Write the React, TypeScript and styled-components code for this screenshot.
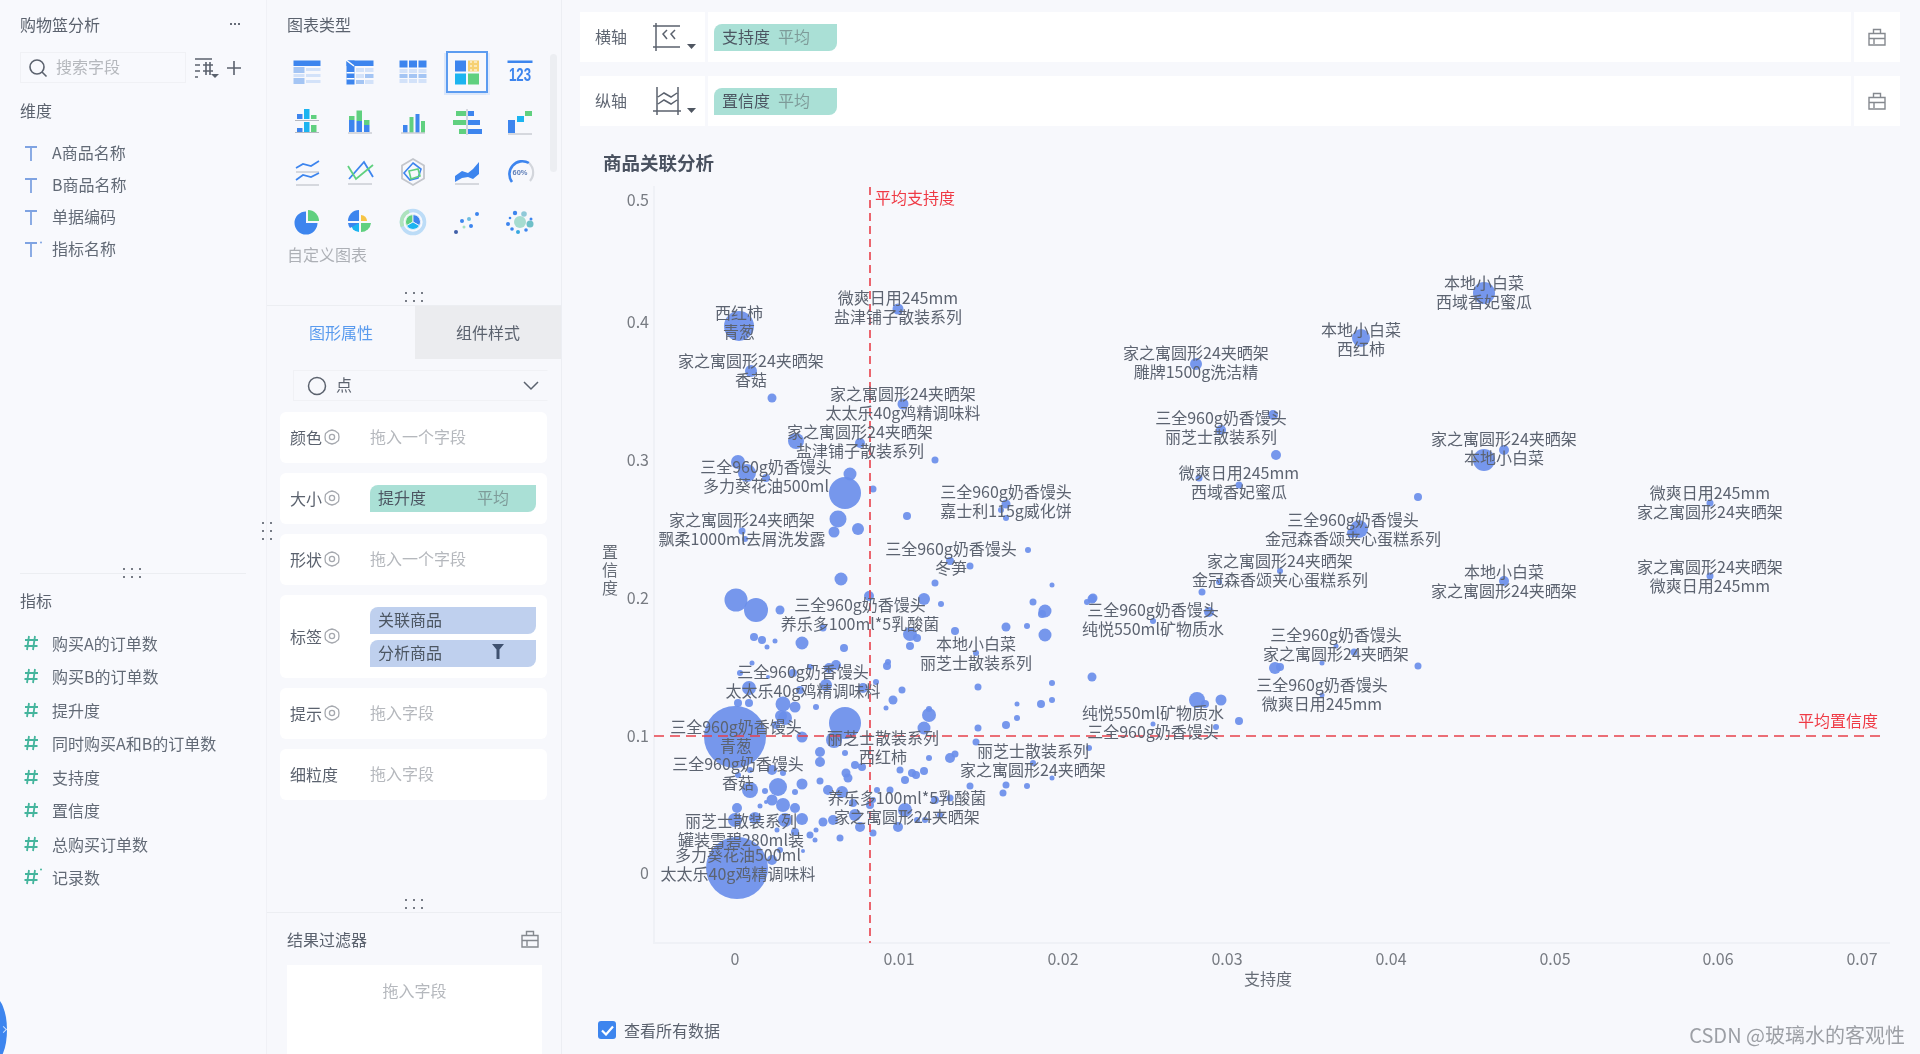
import React from 'react';
import styled, { createGlobalStyle } from 'styled-components';

const Global = createGlobalStyle`
  html, body { margin: 0; padding: 0; background: #f7f8fc; }
  * { box-sizing: border-box; }
  body { font-family: "Noto Sans CJK SC", "Noto Sans", sans-serif; font-size: 16px; color: #5b626e; }
`;

const Page = styled.div`
  position: relative;
  display: flex;
  width: 1920px;
  height: 1054px;
  overflow: hidden;
  background: #f7f8fc;
  filter: blur(0.45px);
`;

const LeftPanel = styled.aside`
  position: relative;
  flex: none;
  width: 266px;
  display: flex;
  flex-direction: column;
  background: #f8f9fd;
`;

const LeftTop = styled.div`
  position: relative;
  flex: none;
  height: 574px;
  margin: 0 20px;
  border-bottom: 1px solid #eceef2;
`;

const Header = styled.div`
  height: 50px;
  display: flex;
  align-items: center;
  justify-content: space-between;
  padding: 0 5px 2px 0;
  line-height: 20px;
`;

const More = styled.span`
  width: 12px;
  height: 2px;
  background: radial-gradient(circle, #666c78 1px, transparent 1.2px) 0 0 / 4px 2px;
`;

const SearchRow = styled.div`
  display: flex;
  align-items: center;
  margin-top: 2px;
`;

const SearchBox = styled.div`
  width: 166px;
  height: 31px;
  display: flex;
  align-items: center;
  gap: 8px;
  padding: 0 0 3px 7px;
  border: 1px solid #f0f1f5;
  color: #b5b8bd;
  & > svg { margin-top: 3px; }
`;

const ToolIcons = styled.div`
  display: flex;
  align-items: center;
  gap: 8px;
  margin-left: 8px;
`;

const SectionTitle = styled.div`
  height: 32px;
  line-height: 32px;
`;

const DimTitle = styled(SectionTitle)`
  margin-top: 11px;
  margin-bottom: 10px;
`;

const MeasureArea = styled.div`
  padding: 10px 20px 0;
`;

const MeasureTitle = styled(SectionTitle)`
  margin-bottom: 10px;
`;

const FieldRow = styled.div<{ $h: number }>`
  height: ${p => p.$h}px;
  display: flex;
  align-items: center;
  gap: 6px;
  padding-left: 4px;
  color: #626a76;
  white-space: nowrap;
`;

const DimIcon = styled.span`
  display: flex;
  margin-top: 4px;
`;

const Grip = styled.div<{ $vertical?: boolean }>`
  position: absolute;
  width: ${p => (p.$vertical ? 16 : 24)}px;
  height: ${p => (p.$vertical ? 24 : 16)}px;
  background: radial-gradient(circle, #777c86 1px, transparent 1.3px) 0 0 / 8px 8px;
`;

const GripLeft = styled(Grip)`
  left: 100px;
  bottom: -8px;
`;

const GripMid = styled(Grip)`
  left: 135px;
  bottom: 0;
`;

const GripSide = styled(Grip)`
  left: -8px;
  top: 519px;
`;

const Launcher = styled.div`
  position: absolute;
  left: -20px;
  top: 997px;
  width: 27px;
  height: 66px;
  border-radius: 50%;
  background: #3d85ee;
  &::after {
    content: '';
    position: absolute;
    left: 21px;
    top: 30px;
    width: 4px;
    height: 4px;
    border-top: 1px solid #cfe2ff;
    border-right: 1px solid #cfe2ff;
    transform: rotate(45deg);
  }
`;

const MidPanel = styled.section`
  position: relative;
  flex: none;
  width: 296px;
  display: flex;
  flex-direction: column;
  border-left: 1px solid #f0f1f6;
  border-right: 1px solid #eceef3;
`;

const ChartTypes = styled.div`
  position: relative;
  flex: none;
  height: 306px;
  border-bottom: 1px solid #eceef2;
`;

const PanelHeading = styled.div`
  height: 50px;
  line-height: 48px;
  padding-left: 20px;
`;

const IconGrid = styled.div`
  display: grid;
  grid-template-columns: repeat(5, 53.4px);
  grid-auto-rows: 50px;
  margin-top: -3px;
  padding-left: 13px;
`;

const IconCell = styled.div<{ $active?: boolean }>`
  display: flex;
  align-items: center;
  justify-content: center;
  & > span {
    width: 42px;
    height: 42px;
    display: flex;
    align-items: center;
    justify-content: center;
    border: 2px solid ${p => (p.$active ? '#5c9cf0' : 'transparent')};
    box-shadow: ${p => (p.$active ? '-2px 2px 0 #dbe7fa, 2px 2px 0 #e4ecfb' : 'none')};
  }
`;

const CustomLabel = styled.div`
  margin: -3px 0 0 20px;
  line-height: 20px;
  color: #adb0b6;
`;

const ScrollThumb = styled.div`
  position: absolute;
  left: 283px;
  top: 54px;
  width: 7px;
  height: 118px;
  border-radius: 4px;
  background: #eceef2;
`;

const AttrBlock = styled.div`
  position: relative;
  flex: none;
  height: 607px;
  border-bottom: 1px solid #eceef2;
`;

const Tabs = styled.div`
  display: flex;
  height: 53px;
`;

const Tab = styled.div<{ $active?: boolean }>`
  width: ${p => (p.$active ? 148 : 146)}px;
  display: flex;
  align-items: center;
  justify-content: center;
  padding-bottom: 2px;
  color: ${p => (p.$active ? '#5a9bee' : '#5b626e')};
  background: ${p => (p.$active ? 'transparent' : '#ebecef')};
`;

const MarkSelect = styled.div`
  height: 31px;
  margin: 11px 13px 11px 26px;
  padding: 0 8px 3px 13px;
  display: flex;
  align-items: center;
  gap: 9px;
  border: 1px solid #f0f1f5;
  border-right-color: transparent;
  & > svg { margin-top: 3px; }
  & > svg:last-child { margin-left: auto; }
`;

const PropList = styled.div`
  display: flex;
  flex-direction: column;
  gap: 10px;
  margin: 0 14px 0 13px;
`;

const PropCard = styled.div<{ $h?: number }>`
  height: ${p => p.$h ?? 51}px;
  display: flex;
  align-items: center;
  padding: 0 11px 0 10px;
  background: #fff;
  border-radius: 6px;
`;

const PropLabel = styled.div`
  flex: none;
  width: 80px;
  margin-top: -2px;
  display: flex;
  align-items: center;
  gap: 2px;
`;

const Placeholder = styled.span`
  margin-top: -3px;
  color: #b5b8bd;
`;

const PillStack = styled.div`
  flex: 1;
  display: flex;
  flex-direction: column;
  gap: 6px;
`;

const Pill = styled.div<{ $kind: 'teal' | 'blue'; $w?: number }>`
  flex: none;
  width: ${p => (p.$w ? `${p.$w}px` : '100%')};
  height: 27px;
  display: flex;
  align-items: center;
  padding: 0 8px 3px;
  border-radius: 8px 0 8px 0;
  background: ${p => (p.$kind === 'teal' ? '#aae0d6' : '#bfd0ee')};
  color: #4c5662;
  white-space: nowrap;
`;

const PillAgg = styled.span<{ $left: number }>`
  display: flex;
  margin-left: ${p => p.$left}px;
  color: #7e9b99;
`;

const FilterBlock = styled.div`
  flex: 1;
  display: flex;
  flex-direction: column;
  padding: 0 19px 0 20px;
`;

const FilterHead = styled.div`
  height: 52px;
  display: flex;
  align-items: center;
  justify-content: space-between;
  padding-right: 3px;
`;

const DropZone = styled.div`
  flex: 1;
  padding-top: 12px;
  text-align: center;
  line-height: 26px;
  background: #fff;
  color: #b5b8bd;
`;

const Main = styled.main`
  flex: 1;
  min-width: 0;
  display: flex;
  flex-direction: column;
`;

const Shelves = styled.div`
  display: flex;
  flex-direction: column;
  gap: 14px;
  padding: 12px 20px 0 18px;
`;

const Shelf = styled.div`
  height: 50px;
  display: flex;
  gap: 3px;
`;

const ShelfCard = styled.div`
  background: #fff;
  display: flex;
  align-items: center;
`;

const ShelfAxis = styled(ShelfCard)`
  flex: none;
  width: 125px;
  padding: 0 0 2px 15px;
  color: #5f6672;
  & > svg { margin: 2px 0 0 26px; }
`;

const ShelfField = styled(ShelfCard)`
  flex: 1;
  padding-left: 6px;
`;

const ShelfLock = styled(ShelfCard)`
  flex: none;
  width: 46px;
  justify-content: center;
`;

const ChartTitle = styled.h2`
  margin: 24px 0 0 41px;
  font-size: 18.5px;
  font-weight: 700;
  line-height: 24px;
  color: #4a5260;
`;

const ChartSvg = styled.svg`
  display: block;
  margin-top: 6px;
  flex: none;
`;

const ViewAll = styled.label`
  display: flex;
  align-items: center;
  gap: 8px;
  margin: 8px 0 0 36px;
  line-height: 24px;
`;

const CheckBox = styled.span`
  width: 18px;
  height: 18px;
  display: flex;
  align-items: center;
  justify-content: center;
  border-radius: 3px;
  background: #3d85ee;
`;

const Watermark = styled.div`
  position: absolute;
  right: 15px;
  bottom: 7px;
  font-size: 20px;
  line-height: 24px;
  color: #9c9fa5;
  white-space: nowrap;
`;

const SearchIcon = () => (
  <svg width="20" height="20" viewBox="0 0 20 20" fill="none" stroke="#5b626e" strokeWidth="1.6">
    <circle cx="9" cy="9" r="7" />
    <path d="M14 14l4.5 4.5" />
  </svg>
);
const FieldsIcon = () => (
  <svg width="25" height="22" viewBox="0 0 25 22" fill="none" stroke="#5b626e" strokeWidth="1.6">
    <path d="M1 2h17M1 8h5M1 14h5M1 20h3M9 8h10M9 14h10M12 5v13M16 5v13" />
    <path d="M17 17h8l-4 4z" fill="#5b626e" stroke="none" />
  </svg>
);
const PlusIcon = () => (
  <svg width="14" height="14" viewBox="0 0 14 14" stroke="#5b626e" strokeWidth="1.6">
    <path d="M0 7h14M7 0v14" />
  </svg>
);
const TIcon = ({ star }: { star?: boolean }) => (
  <svg width="22" height="18" viewBox="0 0 22 18" fill="none" stroke="#7fa3e2" strokeWidth="1.8">
    <path d="M1 2h12M7 2v14" />
    {star && <circle cx="17" cy="1.5" r="1" fill="#7fa3e2" stroke="none" />}
  </svg>
);
const HashIcon = ({ star }: { star?: boolean }) => (
  <svg width="22" height="18" viewBox="0 0 22 18" fill="none" stroke="#45b59d" strokeWidth="1.8">
    <path d="M5 2L3 16M11 2L9 16M1 6h13M0.5 12h13" />
    {star && <circle cx="17" cy="1.5" r="1" fill="#45b59d" stroke="none" />}
  </svg>
);
const GearIcon = () => (
  <svg width="16" height="16" viewBox="0 0 16 16" fill="none" stroke="#a6a9af" strokeWidth="1.3" strokeLinejoin="round">
    <path d="M8 1l3 .8L14.500 4.500 15 8l-.5 3.500L11 14.200 8 15l-3-.8L1.500 11.500 1 8l.5-3.500L5 1.800z" />
    <circle cx="8" cy="8" r="2.600" />
  </svg>
);
const LockIcon = () => (
  <svg width="18" height="18" viewBox="0 0 18 18" fill="none" stroke="#85898f" strokeWidth="1.4">
    <path d="M1 5.500h16V17H1zM5.500 5.500V1.500h7v4M1 10.500h16M6 10v6" />
  </svg>
);
const Funnel = () => (
  <svg width="12" height="15" viewBox="0 0 12 15">
    <path d="M0 0h12L7.500 5.500V15h-3V5.500z" fill="#3f5170" />
  </svg>
);
const AxisXIcon = () => (
  <svg width="44" height="28" viewBox="0 0 44 28" fill="none" stroke="#5b626e" strokeWidth="1.5">
    <path d="M3 0v28M0 3h27M0 24h27M14 7l-4 4 4 5M22 7l-4 4 4 5" />
    <path d="M34 21h9l-4.500 5z" fill="#4f5661" stroke="none" />
  </svg>
);
const AxisYIcon = () => (
  <svg width="44" height="28" viewBox="0 0 44 28" fill="none" stroke="#5b626e" strokeWidth="1.5">
    <path d="M4 0v28M25 0v28M0 24h28M5 10l6-4 7 4 6-4M5 17l6-4 7 4 6-4" />
    <path d="M34 21h9l-4.500 5z" fill="#4f5661" stroke="none" />
  </svg>
);

const B = '#3d85ee';
const L = '#a4c5f4';
const P = '#d3e2f9';
const G = '#60d07f';
const C = '#1cb4f0';
const Y = '#f6c445';
const AX = '#b4b8c0';

const chartIcons: React.ReactNode[] = [
  <>
    <rect x="1.500" y="3.500" width="27" height="5.500" fill={B} />
    <rect x="1.500" y="10" width="11" height="6" fill={L} />
    <rect x="1.500" y="17" width="11" height="3" fill={P} />
    <rect x="1.500" y="21" width="11" height="6" fill={L} />
    <rect x="14" y="11" width="14.500" height="3" fill={P} />
    <rect x="14" y="17" width="14.500" height="3" fill={P} />
    <rect x="14" y="23" width="14.500" height="3" fill={P} />
  </>,
  <>
    <rect x="1.500" y="3.500" width="27" height="5.500" fill={B} />
    <rect x="1.500" y="3.500" width="8" height="24" fill={B} />
    <path d="M1 3l8 6" stroke="#fff" strokeWidth="1.500" />
    <rect x="1.500" y="15" width="8" height="1.500" fill="#fff" />
    <rect x="1.500" y="21" width="8" height="1.500" fill="#fff" />
    <rect x="11" y="11" width="8" height="4" fill={P} />
    <rect x="20" y="11" width="8.500" height="4" fill={P} />
    <rect x="11" y="17" width="8" height="4" fill={P} />
    <rect x="20" y="17" width="8.500" height="4" fill={L} />
    <rect x="11" y="23" width="8" height="4" fill={L} />
    <rect x="20" y="23" width="8.500" height="4" fill={P} />
  </>,
  <>
    <rect x="1.500" y="3.500" width="8" height="7" fill={B} />
    <rect x="11" y="3.500" width="8" height="7" fill={B} />
    <rect x="20.500" y="3.500" width="8" height="7" fill={B} />
    {[12, 17, 22].map(y => (
      <g key={y}>
        <rect x="1.500" y={y} width="8" height="4" fill={y === 17 ? L : P} />
        <rect x="11" y={y} width="8" height="4" fill={y === 17 ? L : P} />
        <rect x="20.500" y={y} width="8" height="4" fill={y === 17 ? L : P} />
      </g>
    ))}
  </>,
  <>
    <rect x="3" y="3.500" width="11" height="11" fill={B} />
    <rect x="16" y="3.500" width="11" height="11" fill={Y} opacity=".75" />
    <path d="M18 5h2M22 5h3M18 9h2M22 9h3M18 13h2M22 13h3" stroke="#fff" strokeWidth="1.200" />
    <rect x="3" y="16.500" width="11" height="11" fill={C} />
    <rect x="16" y="16.500" width="11" height="11" fill={G} />
  </>,
  <>
    <rect x="2.500" y="3.500" width="25" height="2.500" fill={B} />
    <text x="15" y="24" textAnchor="middle" fontSize="19" fontWeight="700" fill={B} fontFamily="Liberation Sans, sans-serif" textLength="22" lengthAdjust="spacingAndGlyphs">123</text>
  </>,
  <>
    <rect x="5" y="7" width="5.500" height="5" fill={B} />
    <rect x="12" y="2" width="5.500" height="10" fill={C} />
    <rect x="19" y="8" width="5.500" height="4" fill={G} />
    <path d="M3 13.500h24M3 25.500h24" stroke={AX} strokeWidth="1" />
    <rect x="5" y="21" width="5.500" height="4" fill={B} />
    <rect x="12" y="15" width="5.500" height="10" fill={C} />
    <rect x="19" y="18" width="5.500" height="7" fill={G} />
  </>,
  <>
    <rect x="4" y="13" width="5.500" height="12" fill={B} />
    <rect x="4" y="9" width="5.500" height="4" fill={G} />
    <rect x="11.500" y="14" width="5.500" height="11" fill={B} />
    <rect x="11.500" y="3.500" width="5.500" height="10.500" fill={G} />
    <rect x="19" y="18" width="5.500" height="7" fill={B} />
    <rect x="19" y="13" width="5.500" height="5" fill={G} />
    <path d="M3 26h24" stroke={AX} />
  </>,
  <>
    <rect x="5" y="18" width="4.500" height="7.500" fill={B} />
    <rect x="11.500" y="10" width="4" height="15.500" fill={G} />
    <rect x="17.500" y="7" width="4" height="18.500" fill={B} />
    <rect x="23" y="14" width="4" height="11.500" fill={G} />
    <path d="M3 26h24" stroke={AX} />
  </>,
  <>
    <rect x="4" y="4" width="10" height="5" fill={G} />
    <rect x="1" y="13" width="13" height="5" fill={G} />
    <rect x="7" y="22" width="7" height="5" fill={G} />
    <path d="M15 2v26" stroke={AX} />
    <rect x="16" y="4" width="6" height="5" fill={B} />
    <rect x="16" y="13" width="12" height="5" fill={B} />
    <rect x="16" y="22" width="14" height="5" fill={B} />
  </>,
  <>
    <rect x="3" y="13" width="7" height="13" fill={B} />
    <rect x="12" y="9" width="7" height="6" fill={C} />
    <rect x="20" y="4" width="7" height="5" fill={G} />
    <path d="M3 27h24" stroke={AX} />
  </>,
  <>
    <path d="M4 11l7-4 8 2 8-5" fill="none" stroke={B} strokeWidth="1.700" />
    <path d="M4 15h23M4 28h23" stroke={AX} />
    <path d="M4 23l7-5 8 2 8-4" fill="none" stroke={B} strokeWidth="1.700" />
  </>,
  <>
    <path d="M4 22L19 5l9 15" fill="none" stroke={B} strokeWidth="1.800" />
    <path d="M3 9l8 13 17-14" fill="none" stroke={G} strokeWidth="1.800" />
    <path d="M3 27h24" stroke={AX} />
  </>,
  <>
    <path d="M15 2l11 6.500v13L15 28 4 21.500v-13z" fill="none" stroke="#c3c6cc" strokeWidth="1.800" />
    <path d="M15 6l8 6-3 9-8 2-6-7z" fill="none" stroke={B} strokeWidth="1.600" />
    <path d="M11 14l9-2 2 7-9 3z" fill="none" stroke={G} strokeWidth="1.600" />
  </>,
  <>
    <path d="M3 19l7-5 6 2 5-4 6-7v12l-6 5-5-2-6 1-7 4z" fill={B} />
    <path d="M3 27h24" stroke={AX} />
  </>,
  <>
    <path d="M7 25A13 13 0 0 1 24 6" fill="none" stroke={B} strokeWidth="2.600" />
    <path d="M24 6A13 13 0 0 1 25 24" fill="none" stroke="#d3d6dc" strokeWidth="2.200" />
    <text x="15" y="18" textAnchor="middle" fontSize="7.500" fontWeight="700" fill="#5f7fb8" fontFamily="Liberation Sans, sans-serif">60%</text>
  </>,
  <>
    <path d="M14 16V4.500A11.500 11.500 0 1 0 25.500 16z" fill={B} />
    <path d="M16 14V3A11 11 0 0 1 27 14z" fill={G} />
  </>,
  <>
    <path d="M14 14V3A11 11 0 0 0 3 14z" fill={B} />
    <path d="M16 14V8a6 6 0 0 1 6 6z" fill={Y} />
    <path d="M14 16H6a8 8 0 0 0 8 9z" fill={C} />
    <path d="M16 16h10a10 10 0 0 1-10 9z" fill={G} />
    <path d="M14 16H3a11 11 0 0 0 2 5l9-5z" fill={B} />
  </>,
  <>
    <circle cx="15" cy="15" r="11.500" fill="none" stroke="#bcdcf7" strokeWidth="3.600" />
    <path d="M4.500 19.500A11.500 11.500 0 0 1 11 4.200" fill="none" stroke="#aee3bd" strokeWidth="3.600" />
    <g stroke="#f8f9fd" strokeWidth=".8">
      <path d="M15 15V7.500a7.500 7.500 0 0 0-6.500 11.250z" fill={G} />
      <path d="M15 15V7.500a7.500 7.500 0 0 1 6.500 11.250z" fill={B} />
      <path d="M15 15l6.500 3.750a7.500 7.500 0 0 1-13 0z" fill={C} />
    </g>
  </>,
  <>
    <circle cx="4" cy="25" r="2" fill="#3f5fa8" />
    <circle cx="10" cy="14" r="2" fill={B} />
    <circle cx="12" cy="20" r="1.500" fill="#a6e0c0" />
    <circle cx="17" cy="12" r="2" fill="#70bfe0" />
    <circle cx="19" cy="19" r="2" fill={B} />
    <circle cx="25" cy="7" r="2" fill={B} />
  </>,
  <>
    <circle cx="15" cy="15" r="6" fill="#a6dcd0" />
    <circle cx="10" cy="6" r="2.200" fill={B} />
    <circle cx="19" cy="7" r="2.800" fill="#8fc9d8" />
    <circle cx="5" cy="11" r="1.300" fill={B} />
    <circle cx="26" cy="12" r="1.500" fill={B} />
    <circle cx="3" cy="17" r="2" fill={B} />
    <circle cx="25" cy="17" r="3.500" fill="#6fc0c8" />
    <circle cx="7" cy="22" r="1.800" fill={B} />
    <circle cx="13" cy="25" r="2" fill="#38a8e0" />
    <circle cx="21" cy="23" r="1.800" fill={B} />
  </>,
];

const bubbles: [number, number, number][] = [
  [739,326,15],[751,371,6],[772,398,4.5],[898,309,5.5],[903,404,5.5],[796,441,8],[860,443,5],[935,460,3.5],
  [738,462,7],[747,473,9],[766,478,4],[850,474,6.5],[845,493,16],[873,489,3.5],[838,519,8.5],[834,532,5.5],
  [858,529,6],[907,516,4],[1006,504,4.5],[1001,510,3],[1006,518,3],[742,531,3.5],[745,539,3],[1028,550,3],
  [950,561,4],[970,566,3.5],[841,579,6.5],[736,600,11.5],[756,610,12],[780,610,4.5],[869,596,5],[924,599,6],
  [935,583,3.5],[941,604,3],[1052,585,2.5],[1033,602,3.5],[1045,611,6.5],[1042,614,4],[1006,627,4.5],[1027,626,3],
  [1045,635,6.5],[955,631,4],[910,634,7],[917,638,4],[910,646,4],[1092,599,4.5],[1087,602,3],[762,640,4],
  [754,637,4],[767,647,2.5],[775,641,2.5],[802,643,6.5],[844,648,4],[823,628,3.5],[836,665,5],[829,668,5],
  [888,662,3],[887,666,4],[976,653,3],[978,687,3.5],[1052,683,3],[1092,677,4.5],[1017,704,2.5],[1041,704,4],
  [1052,700,3],[1017,718,3],[1006,725,4],[978,728,3.5],[976,742,3.5],[902,690,3.5],[876,682,3],[893,700,4.5],
  [886,708,2.5],[929,715,7],[929,709,3],[924,728,6.5],[845,723,16],[735,737,31],[783,704,7.5],[795,707,5.5],
  [802,737,5.5],[816,707,3],[738,703,4],[749,703,4],[749,688,7],[863,688,5],[826,685,6],[800,690,4],[785,718,7],
  [834,740,8],[820,752,5],[820,762,5],[845,753,3],[855,765,4],[862,767,4],[846,773,4.5],[848,778,4.5],[820,781,3.5],
  [802,784,5.5],[772,770,5],[778,787,9],[750,790,8],[765,791,3],[795,792,3],[772,800,5.5],[783,805,7],[795,808,5],
  [737,808,5],[766,802,2],[760,806,2.5],[802,819,6],[785,820,7],[735,820,7],[795,832,4],[810,835,3.5],[816,830,2.5],
  [840,838,3.5],[823,822,4.5],[833,820,5],[815,840,2.5],[860,827,5],[873,833,3.5],[898,827,5],[905,810,7],[855,815,6],
  [870,805,4],[877,790,3],[890,790,3.5],[828,790,5],[842,792,6],[925,820,3],[940,815,3],[900,770,3.5],[905,780,4],
  [912,773,4],[916,775,4],[924,771,4],[929,758,3],[950,758,5],[955,754,3.5],[970,786,3.5],[1006,785,3.5],[1003,793,3.5],
  [1027,786,3],[1052,778,2.5],[1033,763,3],[1089,748,3],[737,868,31],[772,860,5],[780,850,3],[803,851,2],
  [781,716,6],[776,725,4],[740,673,3],[752,663,2.5],[768,677,2],[810,667,3],[793,673,4],[738,775,3],[750,770,3],
  [783,773,3],[777,830,2.5],[755,818,6],[853,803,4],[873,800,3],[917,820,3],[935,800,4],[950,798,3.5],
  [1484,293,11],[1361,338,9],[1196,364,6],[1273,415,5],[1221,430,5],[1276,455,5],[1484,460,11],[1504,450,5],[1418,497,4],
  [1199,478,3.5],[1239,485,3.5],[1710,503,3.5],[1359,529,9],[1352,533,5],[1280,571,3],[1219,582,3],[1202,592,3.5],
  [1504,581,5],[1710,576,3.5],[1093,598,4.5],[1209,612,5],[1153,621,3],[1336,646,2.5],[1354,652,3.5],[1322,663,2.5],
  [1418,666,3.5],[1275,668,6],[1280,667,4],[1197,700,8],[1221,700,5.5],[1205,704,4],[1239,721,4],[1153,724,2.5],
  [1216,727,3],[1322,695,2.5],
];

const JZ = '家之寓圆形24夹晒架';
const SQ = '三全960g奶香馒头';
const WS = '微爽日用245mm';
const LZ = '丽芝士散装系列';
const BD = '本地小白菜';
const YJ = '盐津铺子散装系列';
const TL = '太太乐40g鸡精调味料';
const JG = '金冠森香颂夹心蛋糕系列';
const CY = '纯悦550ml矿物质水';
const XY = '西域香妃蜜瓜';
const YL = '养乐多100ml*5乳酸菌';
const DL = '多力葵花油500ml';

const labels: [number, number, string, string][] = [
  [739,313,'西红柿','青葱'],[898,298,WS,YJ],[751,361,JZ,'香菇'],[903,394,JZ,TL],[860,432,JZ,YJ],
  [766,467,SQ,DL],[1006,492,SQ,'嘉士利115g威化饼'],[742,520,JZ,'飘柔1000ml去屑洗发露'],[951,549,SQ,'冬笋'],
  [860,605,SQ,YL],[976,644,BD,LZ],[803,672,SQ,TL],[736,727,SQ,'青葱'],[883,738,LZ,'西红柿'],[1033,751,LZ,JZ],
  [738,764,SQ,'香菇'],[907,798,YL,JZ],[741,821,LZ,'罐装雪碧280ml装'],[738,855,DL,TL],
  [1484,283,BD,XY],[1361,330,BD,'西红柿'],[1196,353,JZ,'雕牌1500g洗洁精'],[1221,418,SQ,LZ],[1504,439,JZ,BD],
  [1239,473,WS,XY],[1710,493,WS,JZ],[1353,520,SQ,JG],[1280,561,JZ,JG],[1504,572,BD,JZ],[1710,567,JZ,WS],
  [1153,610,SQ,CY],[1336,635,SQ,JZ],[1322,685,SQ,WS],[1153,713,CY,SQ],
];

const yTicks: [string, number][] = [['0.5',200],['0.4',322],['0.3',460],['0.2',598],['0.1',736],['0',873]];
const xTicks: [string, number][] = [['0',735],['0.01',899],['0.02',1063],['0.03',1227],['0.04',1391],['0.05',1555],['0.06',1718],['0.07',1862]];

const dims = ['A商品名称','B商品名称','单据编码','指标名称'];
const measures = ['购买A的订单数','购买B的订单数','提升度','同时购买A和B的订单数','支持度','置信度','总购买订单数','记录数'];

const Scatter = () => (
  <ChartSvg width="1358" height="830" viewBox="562 180 1358 830" fontSize="16" fontFamily='"Noto Sans CJK SC", sans-serif'>
    <path d="M654 186V943H1890" fill="none" stroke="#eff1f6" strokeWidth="2" />
    {bubbles.map(([x, y, r], i) => (
      <circle key={i} cx={x} cy={y} r={r} fill="#6a8eea" fillOpacity=".92" />
    ))}
    <path d="M870 187V943" stroke="#e8404a" strokeWidth="1.600" strokeDasharray="8 5" />
    <path d="M654 736H1880" stroke="#e8404a" strokeWidth="1.600" strokeDasharray="10 6" />
    <g transform="translate(0,-1.5)" dominantBaseline="central">
      {labels.map(([x, y, a, b], i) => (
        <g key={i} fill="#5c6370" textAnchor="middle">
          <text x={x} y={y} dominantBaseline="central">{a}</text>
          <text x={x} y={y + 19} dominantBaseline="central">{b}</text>
        </g>
      ))}
      <text x="875" y="198" fill="#ef3a45" dominantBaseline="central">平均支持度</text>
      <text x="1798" y="721" fill="#ef3a45" dominantBaseline="central">平均置信度</text>
      {yTicks.map(([t, y]) => (
        <text key={t} x="649" y={y} fill="#777b82" textAnchor="end" dominantBaseline="central">{t}</text>
      ))}
      {xTicks.map(([t, x]) => (
        <text key={t} x={x} y="959" fill="#777b82" textAnchor="middle" dominantBaseline="central">{t}</text>
      ))}
      <text x="1268" y="979" fill="#666c76" textAnchor="middle" dominantBaseline="central">支持度</text>
      {['置', '信', '度'].map((c, i) => (
        <text key={c} x="610" y={552 + i * 18} fill="#666c76" textAnchor="middle" dominantBaseline="central">{c}</text>
      ))}
    </g>
  </ChartSvg>
);

const Prop = ({ name, children, h }: { name: string; children: React.ReactNode; h?: number }) => (
  <PropCard $h={h}>
    <PropLabel>{name}<GearIcon /></PropLabel>
    {children}
  </PropCard>
);

export default function App() {
  return (
    <Page>
      <Global />
      <LeftPanel>
        <LeftTop>
          <Header>购物篮分析<More /></Header>
          <SearchRow>
            <SearchBox><SearchIcon />搜索字段</SearchBox>
            <ToolIcons><FieldsIcon /><PlusIcon /></ToolIcons>
          </SearchRow>
          <DimTitle>维度</DimTitle>
          {dims.map((d, i) => (
            <FieldRow key={d} $h={32}><DimIcon><TIcon star={i === 3} /></DimIcon>{d}</FieldRow>
          ))}
          <GripLeft />
        </LeftTop>
        <MeasureArea>
          <MeasureTitle>指标</MeasureTitle>
          {measures.map((m, i) => (
            <FieldRow key={m} $h={33.5}><HashIcon star={i === 7} />{m}</FieldRow>
          ))}
        </MeasureArea>
        <Launcher />
      </LeftPanel>
      <MidPanel>
        <GripSide $vertical />
        <ChartTypes>
          <PanelHeading>图表类型</PanelHeading>
          <IconGrid>
            {chartIcons.map((icon, i) => (
              <IconCell key={i} $active={i === 3}>
                <span><svg width="30" height="30" viewBox="0 0 30 30">{icon}</svg></span>
              </IconCell>
            ))}
          </IconGrid>
          <CustomLabel>自定义图表</CustomLabel>
          <ScrollThumb />
          <GripMid />
        </ChartTypes>
        <AttrBlock>
          <Tabs>
            <Tab $active>图形属性</Tab>
            <Tab>组件样式</Tab>
          </Tabs>
          <MarkSelect>
            <svg width="20" height="20" viewBox="0 0 20 20" fill="none" stroke="#5b626e" strokeWidth="1.500"><circle cx="10" cy="10" r="8.500" /></svg>
            点
            <svg width="16" height="10" viewBox="0 0 16 10" fill="none" stroke="#5b626e" strokeWidth="1.500"><path d="M1 1l7 7 7-7" /></svg>
          </MarkSelect>
          <PropList>
            <Prop name="颜色"><Placeholder>拖入一个字段</Placeholder></Prop>
            <Prop name="大小"><PillStack><Pill $kind="teal">提升度<PillAgg $left={51}>平均</PillAgg></Pill></PillStack></Prop>
            <Prop name="形状"><Placeholder>拖入一个字段</Placeholder></Prop>
            <Prop name="标签" h={83}>
              <PillStack>
                <Pill $kind="blue">关联商品</Pill>
                <Pill $kind="blue">分析商品<PillAgg $left={50}><Funnel /></PillAgg></Pill>
              </PillStack>
            </Prop>
            <Prop name="提示"><Placeholder>拖入字段</Placeholder></Prop>
            <PropCard><PropLabel>细粒度</PropLabel><Placeholder>拖入字段</Placeholder></PropCard>
          </PropList>
          <GripMid />
        </AttrBlock>
        <FilterBlock>
          <FilterHead>结果过滤器<LockIcon /></FilterHead>
          <DropZone>拖入字段</DropZone>
        </FilterBlock>
      </MidPanel>
      <Main>
        <Shelves>
          <Shelf>
            <ShelfAxis>横轴<AxisXIcon /></ShelfAxis>
            <ShelfField><Pill $kind="teal" $w={123}>支持度<PillAgg $left={8}>平均</PillAgg></Pill></ShelfField>
            <ShelfLock><LockIcon /></ShelfLock>
          </Shelf>
          <Shelf>
            <ShelfAxis>纵轴<AxisYIcon /></ShelfAxis>
            <ShelfField><Pill $kind="teal" $w={123}>置信度<PillAgg $left={8}>平均</PillAgg></Pill></ShelfField>
            <ShelfLock><LockIcon /></ShelfLock>
          </Shelf>
        </Shelves>
        <ChartTitle>商品关联分析</ChartTitle>
        <Scatter />
        <ViewAll>
          <CheckBox>
            <svg width="13" height="11" viewBox="0 0 13 11" fill="none" stroke="#fff" strokeWidth="2.200"><path d="M1 5.500l4 4L12 1.500" /></svg>
          </CheckBox>
          查看所有数据
        </ViewAll>
      </Main>
      <Watermark>CSDN @玻璃水的客观性</Watermark>
    </Page>
  );
}
